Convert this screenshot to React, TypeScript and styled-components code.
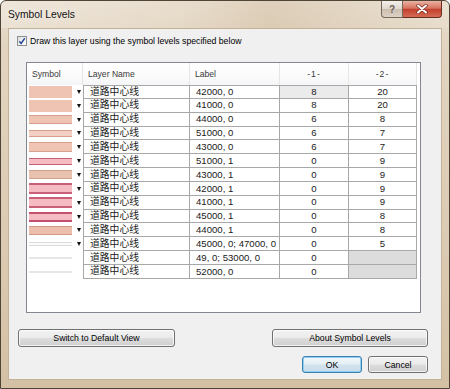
import { Fragment } from 'react'
import styled, { createGlobalStyle } from 'styled-components'

const GlobalStyle = createGlobalStyle`
  html, body {
    margin: 0;
    padding: 0;
    background: #fff;
  }
  body {
    font-family: "Liberation Sans", Arial, sans-serif;
    color: #000;
  }
`

const Window = styled.div`
  width: 450px;
  height: 389px;
  box-sizing: border-box;
  display: flex;
  flex-direction: column;
  border: 1px solid #4f4536;
  border-radius: 6px 6px 0 0;
  overflow: hidden;
  background: linear-gradient(180deg, #e9dece 0%, #e2d4c0 12%, #dccbb3 60%, #d4c1a5 100%);
`

const TitleBar = styled.div`
  height: 27px;
  flex: none;
  display: flex;
  align-items: flex-start;
  background: linear-gradient(90deg, rgba(255, 255, 255, 0.25) 0%, rgba(255, 255, 255, 0) 40%, rgba(190, 165, 130, 0.25) 60%, rgba(255, 255, 255, 0.1) 100%);
`

const Title = styled.div`
  padding-left: 7px;
  line-height: 27px;
  font-size: 10.3px;
  color: #111;
  text-shadow: 0 0 6px rgba(255, 255, 255, 0.9);
`

const Caption = styled.div`
  margin-left: auto;
  margin-right: 7px;
  display: flex;
`

const HelpBtn = styled.div`
  width: 22px;
  height: 17px;
  box-sizing: border-box;
  border: 1px solid #76695a;
  border-top: none;
  border-radius: 0 0 0 4px;
  background: linear-gradient(180deg, #f3efea 0%, #e0d8ce 48%, #cbbfaf 52%, #dcd2c6 100%);
  color: #6b6258;
  font-size: 10px;
  font-weight: bold;
  display: flex;
  align-items: center;
  justify-content: center;
`

const CloseBtn = styled.div`
  width: 39px;
  height: 17px;
  box-sizing: border-box;
  border: 1px solid #6a2c20;
  border-top: none;
  border-left: none;
  border-radius: 0 0 4px 0;
  background: linear-gradient(180deg, #eab1a3 0%, #d77461 45%, #c3412e 52%, #d56a52 100%);
  display: flex;
  align-items: center;
  justify-content: center;
`

const Client = styled.div`
  flex: 1;
  margin: 0 7px 8px;
  box-sizing: border-box;
  border: 1px solid #c3b298;
  background: #f0f0f0;
  display: flex;
  flex-direction: column;
`

const CheckRow = styled.label`
  display: flex;
  align-items: center;
  gap: 3px;
  padding: 7px 0 0 8px;
  font-size: 8.7px;
  line-height: 10px;
`

const CheckBox = styled.span`
  width: 10px;
  height: 10px;
  box-sizing: border-box;
  border: 1px solid #8e8f8f;
  background: linear-gradient(135deg, #dcdcdc 0%, #f4f4f4 60%, #ffffff 100%);
  display: flex;
`

const ListPanel = styled.div`
  margin: 16px 20px 0 17px;
  height: 251px;
  box-sizing: border-box;
  border: 1px solid #828790;
  background: #fff;
`

const Grid = styled.div`
  display: grid;
  grid-template-columns: 56px 107px 90px 69px 68px;
  grid-template-rows: 22px repeat(14, 13.85px);
`

const HeadCell = styled.div<{ $center?: boolean }>`
  display: flex;
  align-items: center;
  justify-content: ${p => (p.$center ? 'center' : 'flex-start')};
  padding-left: ${p => (p.$center ? 0 : 5)}px;
  border-right: 1px solid #e6e6e6;
  font-size: 8.6px;
  color: #3a3a3a;
  letter-spacing: ${p => (p.$center ? 1 : 0)}px;
  background: linear-gradient(180deg, #ffffff 0%, #fbfbfb 60%, #f4f5f7 100%);
`

const SymbolCell = styled.div`
  display: flex;
  align-items: center;
  padding-left: 2px;
`

const Swatch = styled.div<{ $fill: string; $edge: string; $h: number; $ew: number }>`
  width: 43px;
  height: ${p => p.$h}px;
  box-sizing: border-box;
  background: ${p => p.$fill};
  border-top: ${p => p.$ew}px solid ${p => p.$edge};
  border-bottom: ${p => p.$ew}px solid ${p => p.$edge};
`

const Arrow = styled.span<{ $off?: boolean }>`
  width: 0;
  height: 0;
  margin-left: 5px;
  border-left: 2.5px solid transparent;
  border-right: 2.5px solid transparent;
  border-top: 4px solid ${p => (p.$off ? 'transparent' : '#111')};
`

const Cell = styled.div<{ $center?: boolean; $left?: boolean; $top?: boolean; $bg?: string; $cjk?: boolean }>`
  display: flex;
  align-items: center;
  justify-content: ${p => (p.$center ? 'center' : 'flex-start')};
  padding-left: ${p => (p.$center ? 0 : 6)}px;
  box-sizing: border-box;
  border-right: 1px solid #a8a8a8;
  border-bottom: 1px solid #a8a8a8;
  border-left: ${p => (p.$left ? '1px solid #a8a8a8' : 'none')};
  border-top: ${p => (p.$top ? '1px solid #a8a8a8' : 'none')};
  background: ${p => p.$bg || '#fff'};
  font-family: ${p => (p.$cjk ? '"Noto Sans CJK SC", sans-serif' : '"Liberation Sans", Arial, sans-serif')};
  font-size: ${p => (p.$cjk ? 9.8 : 9.6)}px;
  line-height: 1;
  color: #1a1a1a;
  white-space: nowrap;
  overflow: hidden;
`

const ButtonBar = styled.div<{ $end?: boolean; $gap: number }>`
  display: flex;
  justify-content: ${p => (p.$end ? 'flex-end' : 'space-between')};
  gap: 6px;
  margin-top: ${p => p.$gap}px;
  padding: 0 13px 0 9px;
`

const Button = styled.button<{ $w: number; $h: number; $primary?: boolean }>`
  width: ${p => p.$w}px;
  height: ${p => p.$h}px;
  box-sizing: border-box;
  padding: 0;
  border: 1px solid ${p => (p.$primary ? '#3c7fb1' : '#707070')};
  border-radius: 3px;
  background: ${p =>
    p.$primary
      ? 'linear-gradient(180deg, #f1f7fb 0%, #e3eef5 48%, #d3e3ee 52%, #c9dce9 100%)'
      : 'linear-gradient(180deg, #f2f2f2 0%, #ebebeb 48%, #dddddd 52%, #cfcfcf 100%)'};
  box-shadow: inset 0 0 0 1px ${p => (p.$primary ? '#8ed0f2' : 'rgba(255, 255, 255, 0.75)')};
  font-family: "Liberation Sans", Arial, sans-serif;
  font-size: 8.7px;
  color: #000;
`

type Sym = { fill: string; edge: string; h: number; ew: number; arrow: boolean }

const peach = '#efc4b3'
const peachEdge = '#d7a08d'
const pink = '#f6bcc3'
const pinkEdge = '#c9607a'

const rows: { sym: Sym; label: string; l1: string; l2: string | null }[] = [
  { sym: { fill: peach, edge: peach, h: 12, ew: 0, arrow: true }, label: '42000, 0', l1: '8', l2: '20' },
  { sym: { fill: peach, edge: peach, h: 12, ew: 0, arrow: true }, label: '41000, 0', l1: '8', l2: '20' },
  { sym: { fill: peach, edge: peachEdge, h: 9, ew: 1, arrow: true }, label: '44000, 0', l1: '6', l2: '8' },
  { sym: { fill: '#f3d0c4', edge: peachEdge, h: 7, ew: 1, arrow: true }, label: '51000, 0', l1: '6', l2: '7' },
  { sym: { fill: peach, edge: peachEdge, h: 10, ew: 1, arrow: true }, label: '43000, 0', l1: '6', l2: '7' },
  { sym: { fill: pink, edge: pinkEdge, h: 7, ew: 1, arrow: true }, label: '51000, 1', l1: '0', l2: '9' },
  { sym: { fill: '#e9c1b1', edge: '#d2a08e', h: 9, ew: 1, arrow: true }, label: '43000, 1', l1: '0', l2: '9' },
  { sym: { fill: pink, edge: pinkEdge, h: 11, ew: 2, arrow: true }, label: '42000, 1', l1: '0', l2: '9' },
  { sym: { fill: pink, edge: pinkEdge, h: 11, ew: 2, arrow: true }, label: '41000, 1', l1: '0', l2: '9' },
  { sym: { fill: pink, edge: '#c4506d', h: 10, ew: 2, arrow: true }, label: '45000, 1', l1: '0', l2: '8' },
  { sym: { fill: '#ecbfad', edge: '#d39985', h: 9, ew: 1, arrow: true }, label: '44000, 1', l1: '0', l2: '8' },
  { sym: { fill: '#fbfbfb', edge: '#dadada', h: 4, ew: 1, arrow: true }, label: '45000, 0; 47000, 0', l1: '0', l2: '5' },
  { sym: { fill: '#e6e6e6', edge: '#e6e6e6', h: 2, ew: 0, arrow: false }, label: '49, 0; 53000, 0', l1: '0', l2: null },
  { sym: { fill: '#e6e6e6', edge: '#e6e6e6', h: 2, ew: 0, arrow: false }, label: '52000, 0', l1: '0', l2: null },
]

export default function App() {
  return (
    <>
      <GlobalStyle />
      <Window>
        <TitleBar>
          <Title>Symbol Levels</Title>
          <Caption>
            <HelpBtn>?</HelpBtn>
            <CloseBtn>
              <svg width="12" height="10" viewBox="0 0 12 10">
                <path d="M2 1.5 L10 8.5 M10 1.5 L2 8.5" stroke="#7a2a1e" strokeWidth="3.4" strokeLinecap="round" />
                <path d="M2 1.5 L10 8.5 M10 1.5 L2 8.5" stroke="#fff" strokeWidth="2" strokeLinecap="round" />
              </svg>
            </CloseBtn>
          </Caption>
        </TitleBar>
        <Client>
          <CheckRow>
            <CheckBox>
              <svg width="8" height="8" viewBox="0 0 8 8">
                <path d="M1.3 4.2 L3.1 6.4 L6.8 1.2" fill="none" stroke="#2e4f96" strokeWidth="1.5" />
              </svg>
            </CheckBox>
            Draw this layer using the symbol levels specified below
          </CheckRow>
          <ListPanel>
            <Grid>
              <HeadCell>Symbol</HeadCell>
              <HeadCell>Layer Name</HeadCell>
              <HeadCell>Label</HeadCell>
              <HeadCell $center>-1-</HeadCell>
              <HeadCell $center>-2-</HeadCell>
              {rows.map((r, i) => (
                <Fragment key={i}>
                  <SymbolCell>
                    <Swatch $fill={r.sym.fill} $edge={r.sym.edge} $h={r.sym.h} $ew={r.sym.ew} />
                    <Arrow $off={!r.sym.arrow} />
                  </SymbolCell>
                  <Cell $left $top={i === 0} $cjk>
                    道路中心线
                  </Cell>
                  <Cell $top={i === 0}>{r.label}</Cell>
                  <Cell $center $top={i === 0} $bg={i === 0 ? '#ebebeb' : undefined}>
                    {r.l1}
                  </Cell>
                  <Cell $center $top={i === 0} $bg={r.l2 === null ? '#dcdcdc' : undefined}>
                    {r.l2}
                  </Cell>
                </Fragment>
              ))}
            </Grid>
          </ListPanel>
          <ButtonBar $gap={16}>
            <Button $w={157} $h={18}>Switch to Default View</Button>
            <Button $w={156} $h={18}>About Symbol Levels</Button>
          </ButtonBar>
          <ButtonBar $gap={9} $end>
            <Button $w={60} $h={17} $primary>OK</Button>
            <Button $w={60} $h={17}>Cancel</Button>
          </ButtonBar>
        </Client>
      </Window>
    </>
  )
}
